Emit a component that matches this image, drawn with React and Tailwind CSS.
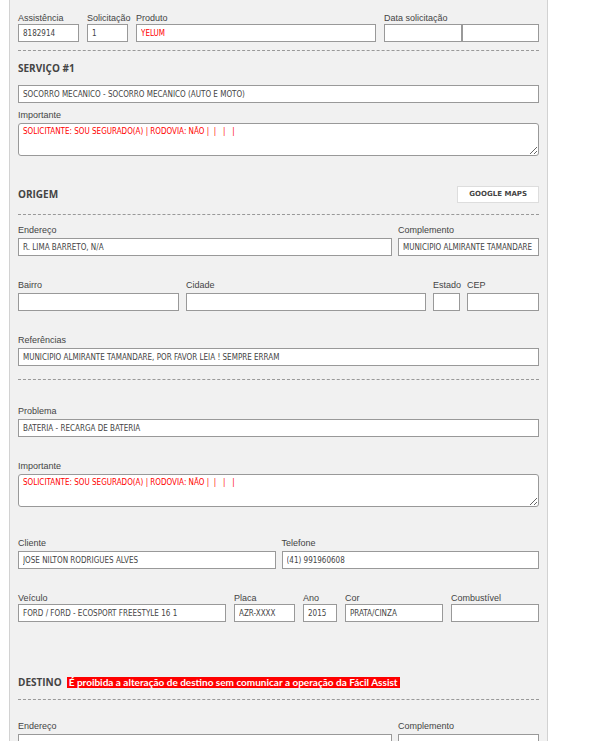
import React, { useId } from "react";

const inputClass =
  "block h-[18px] w-full min-w-0 rounded-none border border-[#999] bg-white px-1 text-[8px] leading-4 focus:outline-none focus:border-[#555]";

const Field = ({ label, value = "", tight, red }) => {
  const id = useId();
  return (
    <div className="min-w-0">
      <label
        htmlFor={id}
        className={`block whitespace-nowrap font-['Liberation_Sans',sans-serif] text-[9px] ${tight ? "h-3 leading-3" : "h-4 leading-4"}`}
      >
        {label}
      </label>
      <input
        id={id}
        type="text"
        readOnly
        value={value}
        className={`${inputClass} ${red ? "text-[#f00]" : ""}`}
      />
    </div>
  );
};

const Notice = ({ label, value }) => {
  const id = useId();
  return (
    <div>
      <label
        htmlFor={id}
        className="block h-4 font-['Liberation_Sans',sans-serif] text-[9px] leading-4"
      >
        {label}
      </label>
      <textarea
        id={id}
        readOnly
        value={value}
        className="block h-[33px] w-full resize rounded-[3px] border border-[#999] bg-white px-1 py-[2px] text-[8px] leading-[11px] text-[#f00] focus:outline-none"
      />
    </div>
  );
};

const Divider = () => <hr className="border-0 border-t border-dashed border-[#999]" />;

const notice = "SOLICITANTE: SOU SEGURADO(A) | RODOVIA: NÃO |  |   |   |";

const App = () => {
  return (
    <div className="min-h-screen bg-white pl-[9px] pr-[55px] font-['DejaVu_Sans_Condensed','DejaVu_Sans',sans-serif] text-[#444]">
      <form className="border-x border-[#d2d2d2] bg-[#f1f1f1] px-2 pb-5 pt-3">
        {/* Request */}
        <div className="mb-2 grid grid-cols-[61fr_41fr_240fr_155fr] gap-2">
          <Field label="Assistência" value="8182914" tight />
          <Field label="Solicitação" value="1" tight />
          <Field label="Produto" value="YELUM" tight red />
          <div className="grid grid-cols-2 items-end">
            <Field label="Data solicitação" tight />
            <input
              type="text"
              readOnly
              aria-label="Hora solicitação"
              className={inputClass}
            />
          </div>
        </div>
        <Divider />

        {/* Service */}
        <h2 className="flex h-[34px] items-center font-['Open_Sans',sans-serif] text-[10px] font-bold">
          SERVIÇO #1
        </h2>
        <input
          type="text"
          readOnly
          aria-label="Serviço"
          value="SOCORRO MECÂNICO - SOCORRO MECÂNICO (AUTO E MOTO)"
          className={`${inputClass} mb-1`}
        />
        <Notice label="Importante" value={notice} />

        {/* Origin */}
        <div className="mt-[19px] flex h-[39px] items-center justify-between">
          <h2 className="font-['Open_Sans',sans-serif] text-[10px] font-bold">ORIGEM</h2>
          <button
            type="button"
            className="h-[17px] border border-[#ddd] bg-white px-[11px] font-['DejaVu_Sans',sans-serif] text-[7px] font-bold leading-[15px] hover:bg-[#eee]"
          >
            GOOGLE MAPS
          </button>
        </div>
        <Divider />
        <div className="mt-[7px] grid grid-cols-[374fr_141fr] gap-[6px]">
          <Field label="Endereço" value="R. LIMA BARRETO, N/A" />
          <Field label="Complemento" value="MUNICIPIO ALMIRANTE TAMANDARE" />
        </div>
        <div className="mt-[21px] grid grid-cols-[161fr_240fr_27fr_72fr] gap-[7px]">
          <Field label="Bairro" />
          <Field label="Cidade" />
          <Field label="Estado" />
          <Field label="CEP" />
        </div>
        <div className="mb-[13px] mt-[21px]">
          <Field
            label="Referências"
            value="MUNICIPIO ALMIRANTE TAMANDARE, POR FAVOR LEIA ! SEMPRE ERRAM"
          />
        </div>
        <Divider />

        {/* Problem */}
        <div className="mb-[21px] mt-[23px]">
          <Field label="Problema" value="BATERIA - RECARGA DE BATERIA" />
        </div>
        <Notice label="Importante" value={notice} />

        {/* Customer and vehicle */}
        <div className="mt-7 grid grid-cols-2 gap-[6px]">
          <Field label="Cliente" value="JOSE NILTON RODRIGUES ALVES" />
          <Field label="Telefone" value="(41) 991960608" />
        </div>
        <div className="mt-[23px] grid grid-cols-[208fr_61fr_34fr_98fr_88fr] gap-2">
          <Field label="Veículo" value="FORD / FORD - ECOSPORT FREESTYLE 16 1" tight />
          <Field label="Placa" value="AZR-XXXX" tight />
          <Field label="Ano" value="2015" tight />
          <Field label="Cor" value="PRATA/CINZA" tight />
          <Field label="Combustível" tight />
        </div>

        {/* Destination */}
        <div className="mt-[43px] flex h-[34px] items-center gap-[5px] text-[10px] font-bold">
          <h2 className="font-['Open_Sans',sans-serif]">DESTINO</h2>
          <span className="bg-[#f00] px-[2px] font-[Lato,sans-serif] leading-[11px] text-white">
            É proibida a alteração de destino sem comunicar a operação da Fácil Assist
          </span>
        </div>
        <Divider />
        <div className="mt-[18px] grid grid-cols-[374fr_141fr] gap-[6px]">
          <Field label="Endereço" />
          <Field label="Complemento" />
        </div>
      </form>
    </div>
  );
};

export default App;
